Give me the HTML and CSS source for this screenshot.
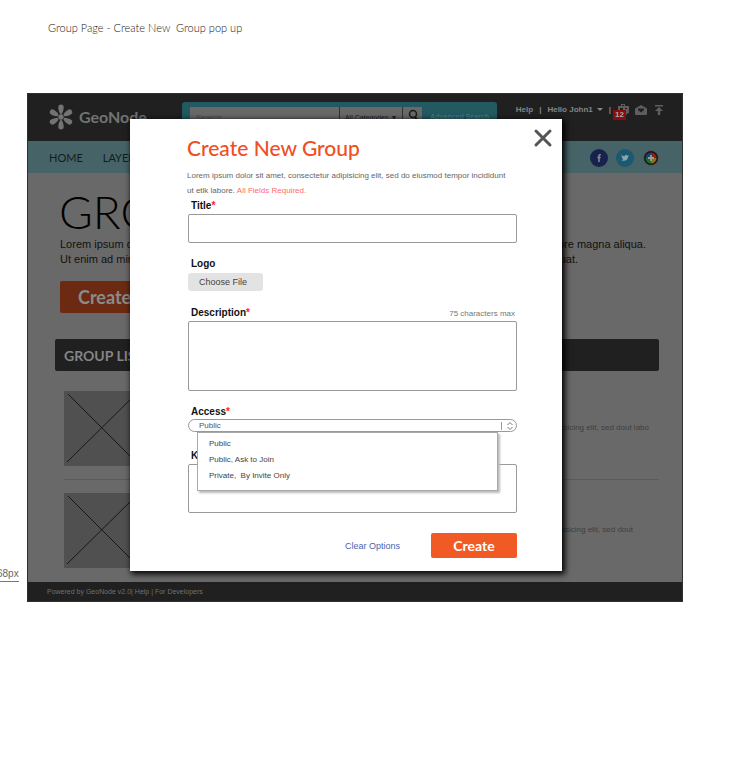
FILE: index.html
```html
<!DOCTYPE html>
<html lang="en">
<head>
<meta charset="utf-8">
<title>Group Page - Create New Group</title>
<link rel="stylesheet" href="styles.css">
</head>
<body>
<p class="caption">Group Page - Create New &nbsp;Group pop up</p>
<p class="measure">68px</p>
<div class="frame">
  <header class="topbar">
    <a class="brand" href="#">
      <svg class="brand-mark" viewBox="0 0 26 26" aria-hidden="true"><g fill="currentColor"><path id="petal" d="M13 11.5C11.500 9 10.200 6 10.300 3.200a2.700 2.700 0 0 1 5.400 0C15.800 6 14.500 9 13 11.500z"/><use href="#petal" transform="rotate(60 13 13)"/><use href="#petal" transform="rotate(120 13 13)"/><use href="#petal" transform="rotate(180 13 13)"/><use href="#petal" transform="rotate(240 13 13)"/><use href="#petal" transform="rotate(300 13 13)"/></g><circle cx="13" cy="13" r="3.300" fill="#202020"/><circle cx="13" cy="13" r="2.700" fill="currentColor"/></svg>
      <span>GeoNode</span>
    </a>
    <form class="search">
      <input class="search-text" type="text" placeholder="Search" aria-label="Search">
      <button class="search-cat" type="button">All Categories <span>▼</span></button>
      <button class="search-go" type="button" aria-label="Go"><svg viewBox="0 0 12 16"><circle cx="6" cy="5" r="3.5" fill="none" stroke="#1a1a1a" stroke-width="1.5"/><path d="M8 8l3 4" stroke="#1a1a1a" stroke-width="2"/></svg></button>
      <a class="advanced" href="#">Advanced Search</a>
    </form>
    <div class="account">
      <a href="#">Help</a><span>|</span><a class="user" href="#">Hello John1 <svg class="caret" viewBox="0 0 6 4" aria-hidden="true"><path d="M0 0h6L3 3z" fill="currentColor"/></svg></a><span>|</span>
      <a class="alerts" href="#" aria-label="Notifications"><svg viewBox="0 0 12 12"><path fill="currentColor" fill-rule="evenodd" d="M1 2h3V0h4v2h4v7H1zM3 4v2h3V4zm5 0v1h2V4zM5 1v1h2V1zM8 9h3l-2 2z"/></svg><span class="badge">12</span></a>
      <a href="#" aria-label="Messages"><svg viewBox="0 0 12 12"><path fill="currentColor" fill-rule="evenodd" d="M6 1l6 3.500V10a1 1 0 0 1-1 1H1a1 1 0 0 1-1-1V4.500zM3 4.500V6l3 2.500L9 6V4.500z"/></svg></a>
      <a href="#" aria-label="Upload"><svg viewBox="0 0 12 12"><path fill="currentColor" d="M2 1h8v1.500H2zM6 3l4 4H7.200v4H4.800V7H2z"/></svg></a>
    </div>
  </header>
  <nav class="nav">
    <a href="#">HOME</a><a href="#">LAYERS</a>
    <div class="social">
      <a href="#" aria-label="Facebook"><svg viewBox="0 0 18 18"><circle cx="9" cy="9" r="9" fill="#17234d"/><path d="M10.800 5.700H9.700q-.7 0-.7.900V13M7.300 8.600h3.300" fill="none" stroke="#858b9c" stroke-width="1.500"/></svg></a>
      <a href="#" aria-label="Twitter"><svg viewBox="0 0 18 18"><circle cx="9" cy="9" r="9" fill="#1b5872"/><path d="M5.500 6.200 8.400 7.600C8.500 5.800 10.700 5.600 11.400 6.600L13 6.500l-1 1.400c0 3-3.500 4.800-6.500 3.300l1.800-.8L5.800 9l.8-.1-1.100-1.300z" fill="#8ba5ad"/></svg></a>
      <a href="#" aria-label="Google Plus"><svg viewBox="0 0 18 18"><circle cx="9" cy="9" r="7.500" fill="#171717" stroke="#5b5552"/><path d="M9 3.500A5.500 5.500 0 0 0 3.500 9H9z" fill="#174478"/><path d="M9 3.500A5.500 5.500 0 0 1 14.500 9H9z" fill="#8b1f15"/><path d="M14.500 9A5.500 5.500 0 0 1 9 14.500V9z" fill="#8b7018"/><path d="M9 14.500A5.500 5.500 0 0 1 3.500 9H9z" fill="#176e2d"/><path d="M9 6v6M6 9h6" stroke="#999" stroke-width="1.800"/></svg></a>
    </div>
  </nav>
  <main class="page">
    <h1>GROUPS</h1>
    <div class="intro"><p><span>Lorem ipsum dolor sit amet</span><span>ut labore et dolore magna aliqua.</span></p><p><span>Ut enim ad minim veniam</span><span class="intro-end">consequat.</span></p></div>
    <button class="create-group" type="button">Create Group</button>
    <h2>GROUP LIST</h2>
    <article class="group"><svg class="thumb" viewBox="0 0 76 76"><path d="M4 3l69 69M73 3L3 72"/></svg><p>adipisicing elit, sed dout labo</p></article>
    <article class="group"><svg class="thumb" viewBox="0 0 76 76"><path d="M4 3l69 69M73 3L3 72"/></svg><p class="short">adipisicing elit, sed dout</p></article>
  </main>
  <footer class="footer">Powered by GeoNode v2.0| <a href="#">Help</a> | <a href="#">For Developers</a></footer>

  <section class="modal" role="dialog" aria-labelledby="dialog-title">
    <button class="close" type="button" aria-label="Close"><svg viewBox="0 0 20 20"><path d="M3 3l14 14M17 3L3 17" stroke="#555" stroke-width="3" stroke-linecap="round"/></svg></button>
    <h2 id="dialog-title">Create New Group</h2>
    <p class="help">Lorem ipsum dolor sit amet, consectetur adipisicing elit, sed do eiusmod tempor incididunt<br>ut etlk labore. <span class="required">All Fields Required.</span></p>
    <form>
      <div class="field field-title"><label for="title">Title<i>*</i></label><input id="title" type="text"></div>
      <div class="field field-logo"><label for="logo">Logo</label><button id="logo" type="button">Choose File</button></div>
      <div class="field field-desc"><div class="label-row"><label for="desc">Description<i>*</i></label><small>75 characters max</small></div><textarea id="desc"></textarea></div>
      <div class="field field-access"><label for="access">Access<i>*</i></label>
        <div class="select"><select id="access"><option>Public</option><option>Public, Ask to Join</option><option>Private, By Invite Only</option></select>
          <svg class="stepper" viewBox="0 0 14 10" aria-hidden="true"><path d="M.5 1v8" stroke="#999"/><path d="M6.500 4l2.500-2.500L11.500 4M6.500 6l2.500 2.500L11.500 6" fill="none" stroke="#777"/></svg>
          <ul class="menu"><li>Public</li><li>Public, Ask to Join</li><li>Private, &nbsp;By Invite Only</li></ul>
        </div>
      </div>
      <div class="field field-keys"><label for="keys">Keywords</label><textarea id="keys"></textarea></div>
      <div class="actions"><a href="#">Clear Options</a><button type="submit">Create</button></div>
    </form>
  </section>
</div>
</body>
</html>
```
FILE: styles.css
```css
* { box-sizing: border-box; }
body { margin: 0; background: #fff; font-family: "Liberation Sans", Arial, sans-serif; color: #555; overflow-x: hidden; }
h1, h2, p, ul { margin: 0; padding: 0; }
a { color: inherit; text-decoration: none; }
button, input, select, textarea { font: inherit; border-radius: 0; }
svg { display: block; }
.caption { padding: 20px 48px 0; font: 300 11px/16px Lato, sans-serif; color: #222; height: 93px; }
.measure { position: absolute; left: -3px; top: 566px; font-size: 10px; line-height: 15px; border-bottom: 1px solid #777; color: #666; }
.frame { position: relative; margin: 0 67px 0 27px; background: #696969; border: 1px solid #303030; overflow: hidden; }

.topbar { display: flex; align-items: flex-start; height: 47px; background: #202020; padding: 0 17px 0 20px; color: #777; }
.brand { display: flex; align-items: center; gap: 5px; width: 134px; margin-top: 10px; font: 700 16px/26px Lato, sans-serif; color: #737373; }
.brand-mark { width: 26px; height: 26px; }
.search { display: flex; width: 315px; height: 36px; margin-top: 8px; padding: 5px 8px; background: #235a62; border-radius: 3px; }
.search > * { border: 0; height: 20px; padding: 0; background: #696969; font-size: 8px; color: #222; }
.search .search-text { width: 150px; padding-left: 6px; }
.search-text::placeholder { color: #494949; }
.search .search-cat { width: 64px; border-left: 1px solid #333; font-size: 7px; white-space: nowrap; }
.search .search-go { width: 20px; border-left: 1px solid #333; }
.search-go svg { width: 12px; height: 16px; margin: 0 auto; }
.search .advanced { background: none; color: #477b81; font-weight: 700; line-height: 20px; margin-left: 8px; font-size: 7px; white-space: nowrap; }
.account { display: flex; align-items: center; gap: 6px; margin: 9px 0 0 auto; font: 700 8px/14px "Liberation Sans", Arial, sans-serif; color: #858585; white-space: nowrap; }
.account svg { width: 12px; height: 12px; color: #5e5e5e; }
.account .user { display: flex; align-items: center; gap: 4px; }
.account .caret { width: 6px; height: 4px; color: #858585; }
.alerts { position: relative; }
.badge { position: absolute; left: -4px; top: 6px; background: #8b0b0e; color: #aaa; font-size: 8px; line-height: 10px; padding: 0 2px; }

.nav { display: flex; align-items: center; gap: 20px; height: 32px; padding: 2px 22px 0 21px; background: #466467; font: 400 11px/16px Lato, sans-serif; color: #151b1c; }
.social { display: flex; gap: 8px; margin-left: auto; }
.social svg { width: 18px; height: 18px; }

.page { padding: 14px 23px 14px 27px; }
.page h1 { padding-left: 4px; font: 300 46px/50px Lato, sans-serif; color: #000; }
.intro { padding: 0 13px 0 5px; font-size: 11px; line-height: 15px; color: #111; }
.intro p { display: flex; justify-content: space-between; }
.intro .intro-end { padding-right: 68px; }
.create-group { margin: 14px 0 0 5px; width: 140px; height: 32px; padding: 0 0 0 18px; border: 0; border-radius: 2px; background: #6c2a12; color: #8b8b8b; font: 700 18px/32px Lato, sans-serif; text-align: left; }
.page h2 { margin: 26px 0 20px; padding-left: 9px; background: #202020; border-radius: 2px; color: #858585; font: 700 14px/34px Lato, sans-serif; height: 32px; }
.group { display: flex; justify-content: space-between; margin-left: 9px; padding-bottom: 13px; }
.group + .group { border-top: 1px solid #5b5b5b; padding: 13px 0 0; }
.group p { padding: 31px 10px 0 0; font-size: 8px; line-height: 12px; color: #404040; }
.group .short { padding-right: 26px; }
.thumb { width: 75px; height: 75px; background: #505050; fill: none; stroke: #161616; }
.footer { height: 19px; padding-left: 19px; background: #202020; color: #707070; font-size: 7px; line-height: 19px; }

.modal { position: absolute; top: 25px; left: 102px; right: 120px; padding: 16px 45px 13px 57px; background: #fff; box-shadow: 2px 2px 6px 1px #000; }
.modal h2 { font: 500 21px/26px Lato, sans-serif; color: #f04e23; }
.close { position: absolute; right: 9px; top: 9px; width: 20px; height: 20px; padding: 0; border: 0; background: none; }
.help { margin-top: 7px; font-size: 8px; line-height: 15px; color: #666; white-space: nowrap; }
.required { color: #ff6b6b; }
.field { margin-left: 1px; display: flex; flex-direction: column; align-items: stretch; }
.field label { padding-left: 3px; font-size: 10px; font-weight: 700; line-height: 15px; color: #111; }
.field i { color: #f22; font-style: normal; }
.field input, .field textarea { display: block; width: 100%; border: 1px solid #999; border-radius: 2px; background: #fff; resize: none; }
.field-title input { height: 29px; margin-top: 1px; }
.field-logo { margin-top: 13px; align-items: flex-start; }
.field-logo button { width: 75px; height: 18px; margin-top: 2px; padding: 0 0 0 11px; border: 0; border-radius: 3px; background: #e3e3e3; font-size: 9px; text-align: left; color: #444; }
.field-desc { margin-top: 14px; }
.label-row { display: flex; justify-content: space-between; align-items: flex-end; }
.label-row small { padding-right: 2px; font-size: 8px; line-height: 12px; color: #777; }
.field-desc textarea { height: 70px; margin-top: 1px; }
.field-access { margin-top: 13px; }
.select { position: relative; }
.select select { display: block; appearance: none; width: 100%; height: 13px; padding: 0 10px; border: 1px solid #999; border-radius: 7px; background: #fff; color: #555; font-size: 8px; line-height: 11px; }
.stepper { position: absolute; right: 2px; top: 2px; width: 14px; height: 10px; }
.menu { position: absolute; z-index: 1; left: 9px; right: 19px; top: 13px; padding: 3px 11px 6px; background: #fff; border: 1px solid #aaa; box-shadow: 2px 2px 2px #bbb; list-style: none; font-size: 8px; line-height: 16px; color: #444; }
.field-keys { margin-top: 16px; }
.field-keys textarea { height: 49px; margin-top: 1px; }
.actions { display: flex; justify-content: flex-end; align-items: center; gap: 31px; margin-top: 20px; font-size: 9px; color: #4864b0; }
.actions button { width: 86px; height: 25px; padding: 0; border: 0; border-radius: 2px; background: #f15a24; color: #fff; font: 700 14px/25px Lato, sans-serif; }
```
